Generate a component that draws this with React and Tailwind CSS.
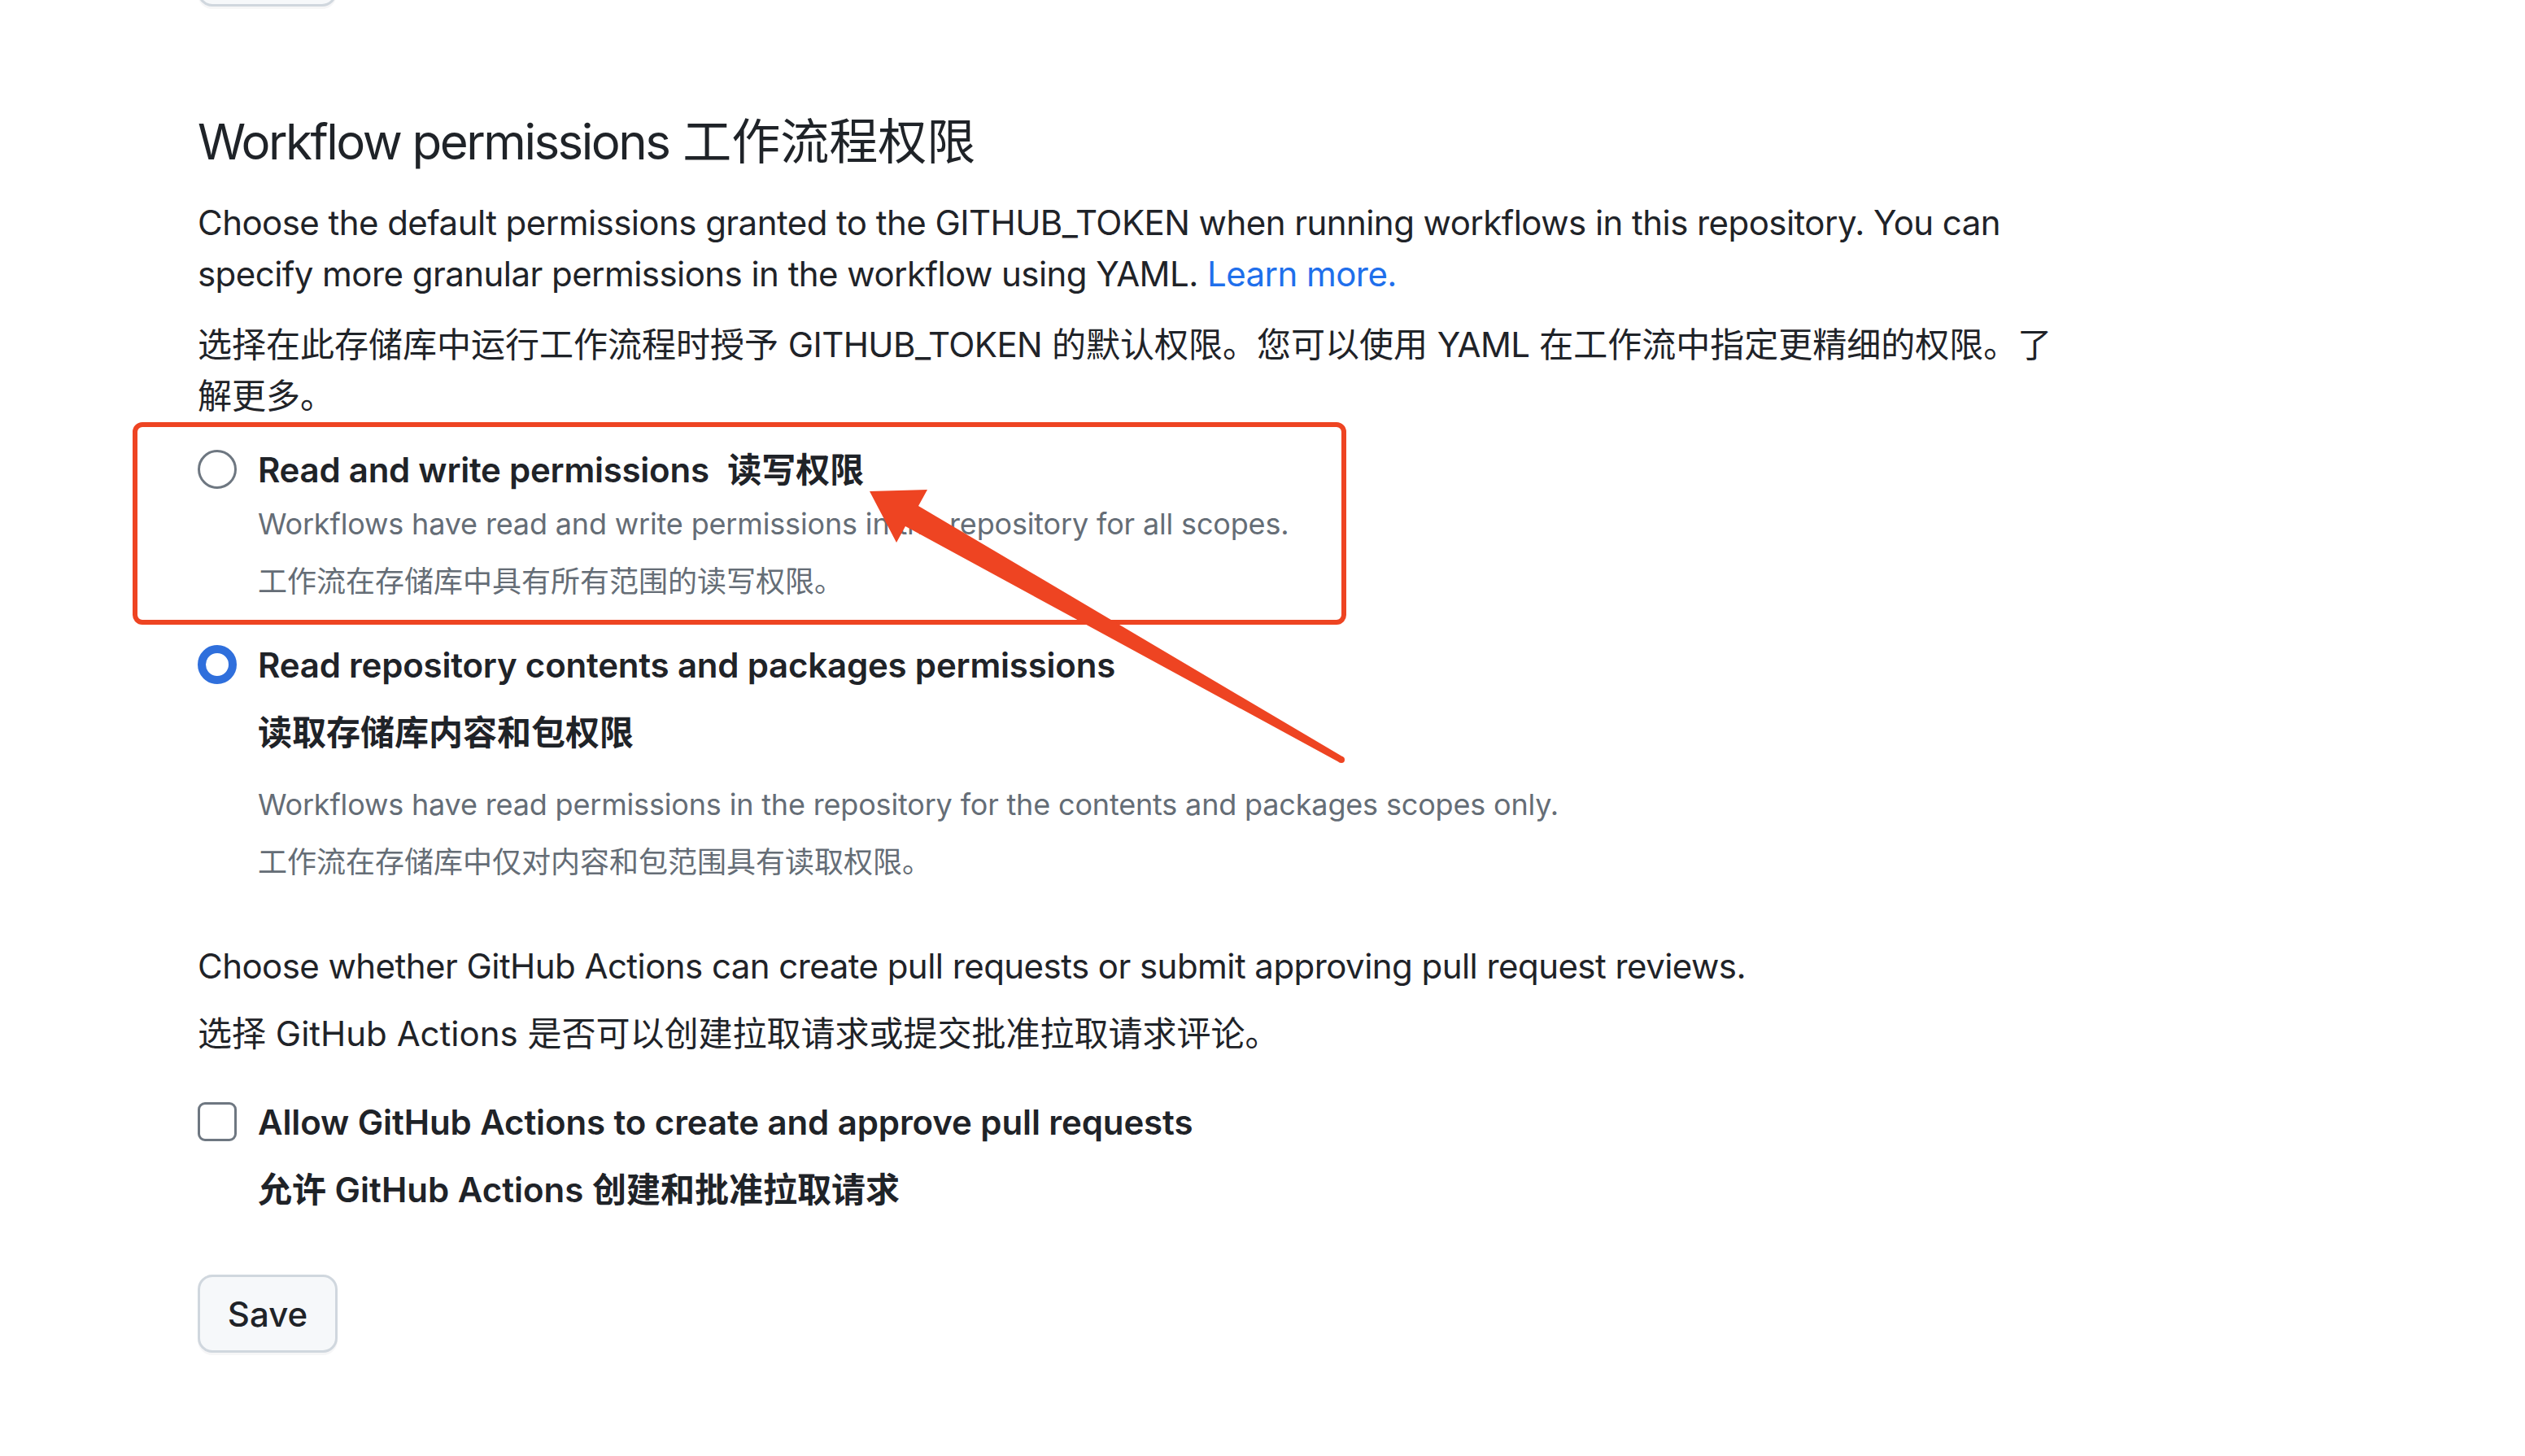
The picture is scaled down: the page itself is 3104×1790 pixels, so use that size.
export default function App() {
  const font = "font-['Inter','Noto_Sans_CJK_SC',sans-serif]";
  return (
    <div className={`relative h-[1790px] w-[3104px] overflow-hidden bg-white text-[#1f2328] ${font}`}>
      <div className="pl-[243px]">
        {/* previous section's button, cut off at the top */}
        <div className="-mt-[88px] h-[96px] w-[171px] rounded-[18px] border-[3px] border-[#d0d7de] bg-[#f6f8fa] shadow-[0_3px_0_rgba(31,35,40,0.04)]" />

        <h2 className="mt-[121px] whitespace-nowrap text-[60px] font-normal leading-[90px]">
          <span className="tracking-[-2.5px]">Workflow permissions</span> 工作流程权限
        </h2>

        <p className="mt-[23px] whitespace-nowrap text-[42px] leading-[63px] tracking-[-0.55px]">
          Choose the default permissions granted to the GITHUB_TOKEN when running workflows in this repository. You can
          <br />
          specify more granular permissions in the workflow using YAML.{" "}
          <span className="text-[#1f6feb]">Learn more.</span>
        </p>

        <p className="mt-[24px] whitespace-nowrap text-[42px] leading-[63px]">
          选择在此存储库中运行工作流程时授予 <span className="tracking-[-0.6px]">GITHUB_TOKEN</span> 的默认权限。您可以使用{" "}
          <span className="tracking-[-0.6px]">YAML</span> 在工作流中指定更精细的权限。了
          <br />
          解更多。
        </p>

        {/* Option 1: read and write */}
        <div className="relative mt-[28px]">
          <div className="pointer-events-none absolute -bottom-[26px] -left-[80px] -top-[27px] w-[1492px] rounded-[12px] border-[6px] border-[#ee4422]" />
          <div className="flex gap-[26px]">
            <span className="mt-[7px] h-[48px] w-[48px] shrink-0 rounded-full border-[3px] border-[#6e7781] bg-white" />
            <div>
              <div className="whitespace-nowrap text-[42px] font-semibold leading-[63px]">
                <span className="tracking-[-0.25px]">Read and write permissions</span>{" "}
                <span className="ml-[12px]">读写权限</span>
              </div>
              <div className="mt-[8px] whitespace-nowrap text-[36px] leading-[54px] tracking-[-0.16px] text-[#656d76]">
                Workflows have read and write permissions in the repository for all scopes.
              </div>
              <div className="mt-[17px] whitespace-nowrap text-[36px] leading-[54px] text-[#656d76]">
                工作流在存储库中具有所有范围的读写权限。
              </div>
            </div>
          </div>
        </div>

        {/* Option 2: read only */}
        <div className="mt-[44px] flex gap-[26px]">
          <span className="mt-[7px] h-[48px] w-[48px] shrink-0 rounded-full border-[10px] border-[#2f6fdc] bg-white" />
          <div>
            <div className="whitespace-nowrap text-[42px] font-semibold leading-[63px] tracking-[-0.2px]">
              Read repository contents and packages permissions
            </div>
            <div className="mt-[20px] whitespace-nowrap text-[42px] font-semibold leading-[63px]">
              读取存储库内容和包权限
            </div>
            <div className="mt-[30px] whitespace-nowrap text-[36px] leading-[54px] tracking-[-0.17px] text-[#656d76]">
              Workflows have read permissions in the repository for the contents and packages scopes only.
            </div>
            <div className="mt-[17px] whitespace-nowrap text-[36px] leading-[54px] text-[#656d76]">
              工作流在存储库中仅对内容和包范围具有读取权限。
            </div>
          </div>
        </div>

        <p className="mt-[69px] whitespace-nowrap text-[42px] leading-[63px] tracking-[-0.55px]">
          Choose whether GitHub Actions can create pull requests or submit approving pull request reviews.
        </p>
        <p className="mt-[20px] whitespace-nowrap text-[42px] leading-[63px]">
          选择 GitHub Actions 是否可以创建拉取请求或提交批准拉取请求评论。
        </p>

        <div className="mt-[46px] flex gap-[26px]">
          <span className="mt-[7px] h-[48px] w-[48px] shrink-0 rounded-[9px] border-[3px] border-[#6e7781] bg-white" />
          <div>
            <div className="whitespace-nowrap text-[42px] font-semibold leading-[63px] tracking-[-0.1px]">
              Allow GitHub Actions to create and approve pull requests
            </div>
            <div className="mt-[20px] whitespace-nowrap text-[42px] font-semibold leading-[63px]">
              允许 GitHub Actions 创建和批准拉取请求
            </div>
          </div>
        </div>

        <button className="mt-[73px] flex h-[96px] w-[172px] items-center justify-center rounded-[18px] border-[3px] border-[#d0d7de] bg-[#f6f8fa] text-[42px] font-medium text-[#1f2328] shadow-[0_3px_0_rgba(31,35,40,0.04)]">
          Save
        </button>
      </div>

      {/* annotation arrow */}
      <svg
        className="pointer-events-none absolute left-0 top-0"
        width="3104"
        height="1790"
        viewBox="0 0 3104 1790"
      >
        <polygon
          fill="#ee4422"
          points="1069,604 1140,602 1129,622 1651,930.5 1647,937.5 1113,647 1102,667"
        />
        <circle cx="1649" cy="934" r="4" fill="#ee4422" />
      </svg>
    </div>
  );
}
